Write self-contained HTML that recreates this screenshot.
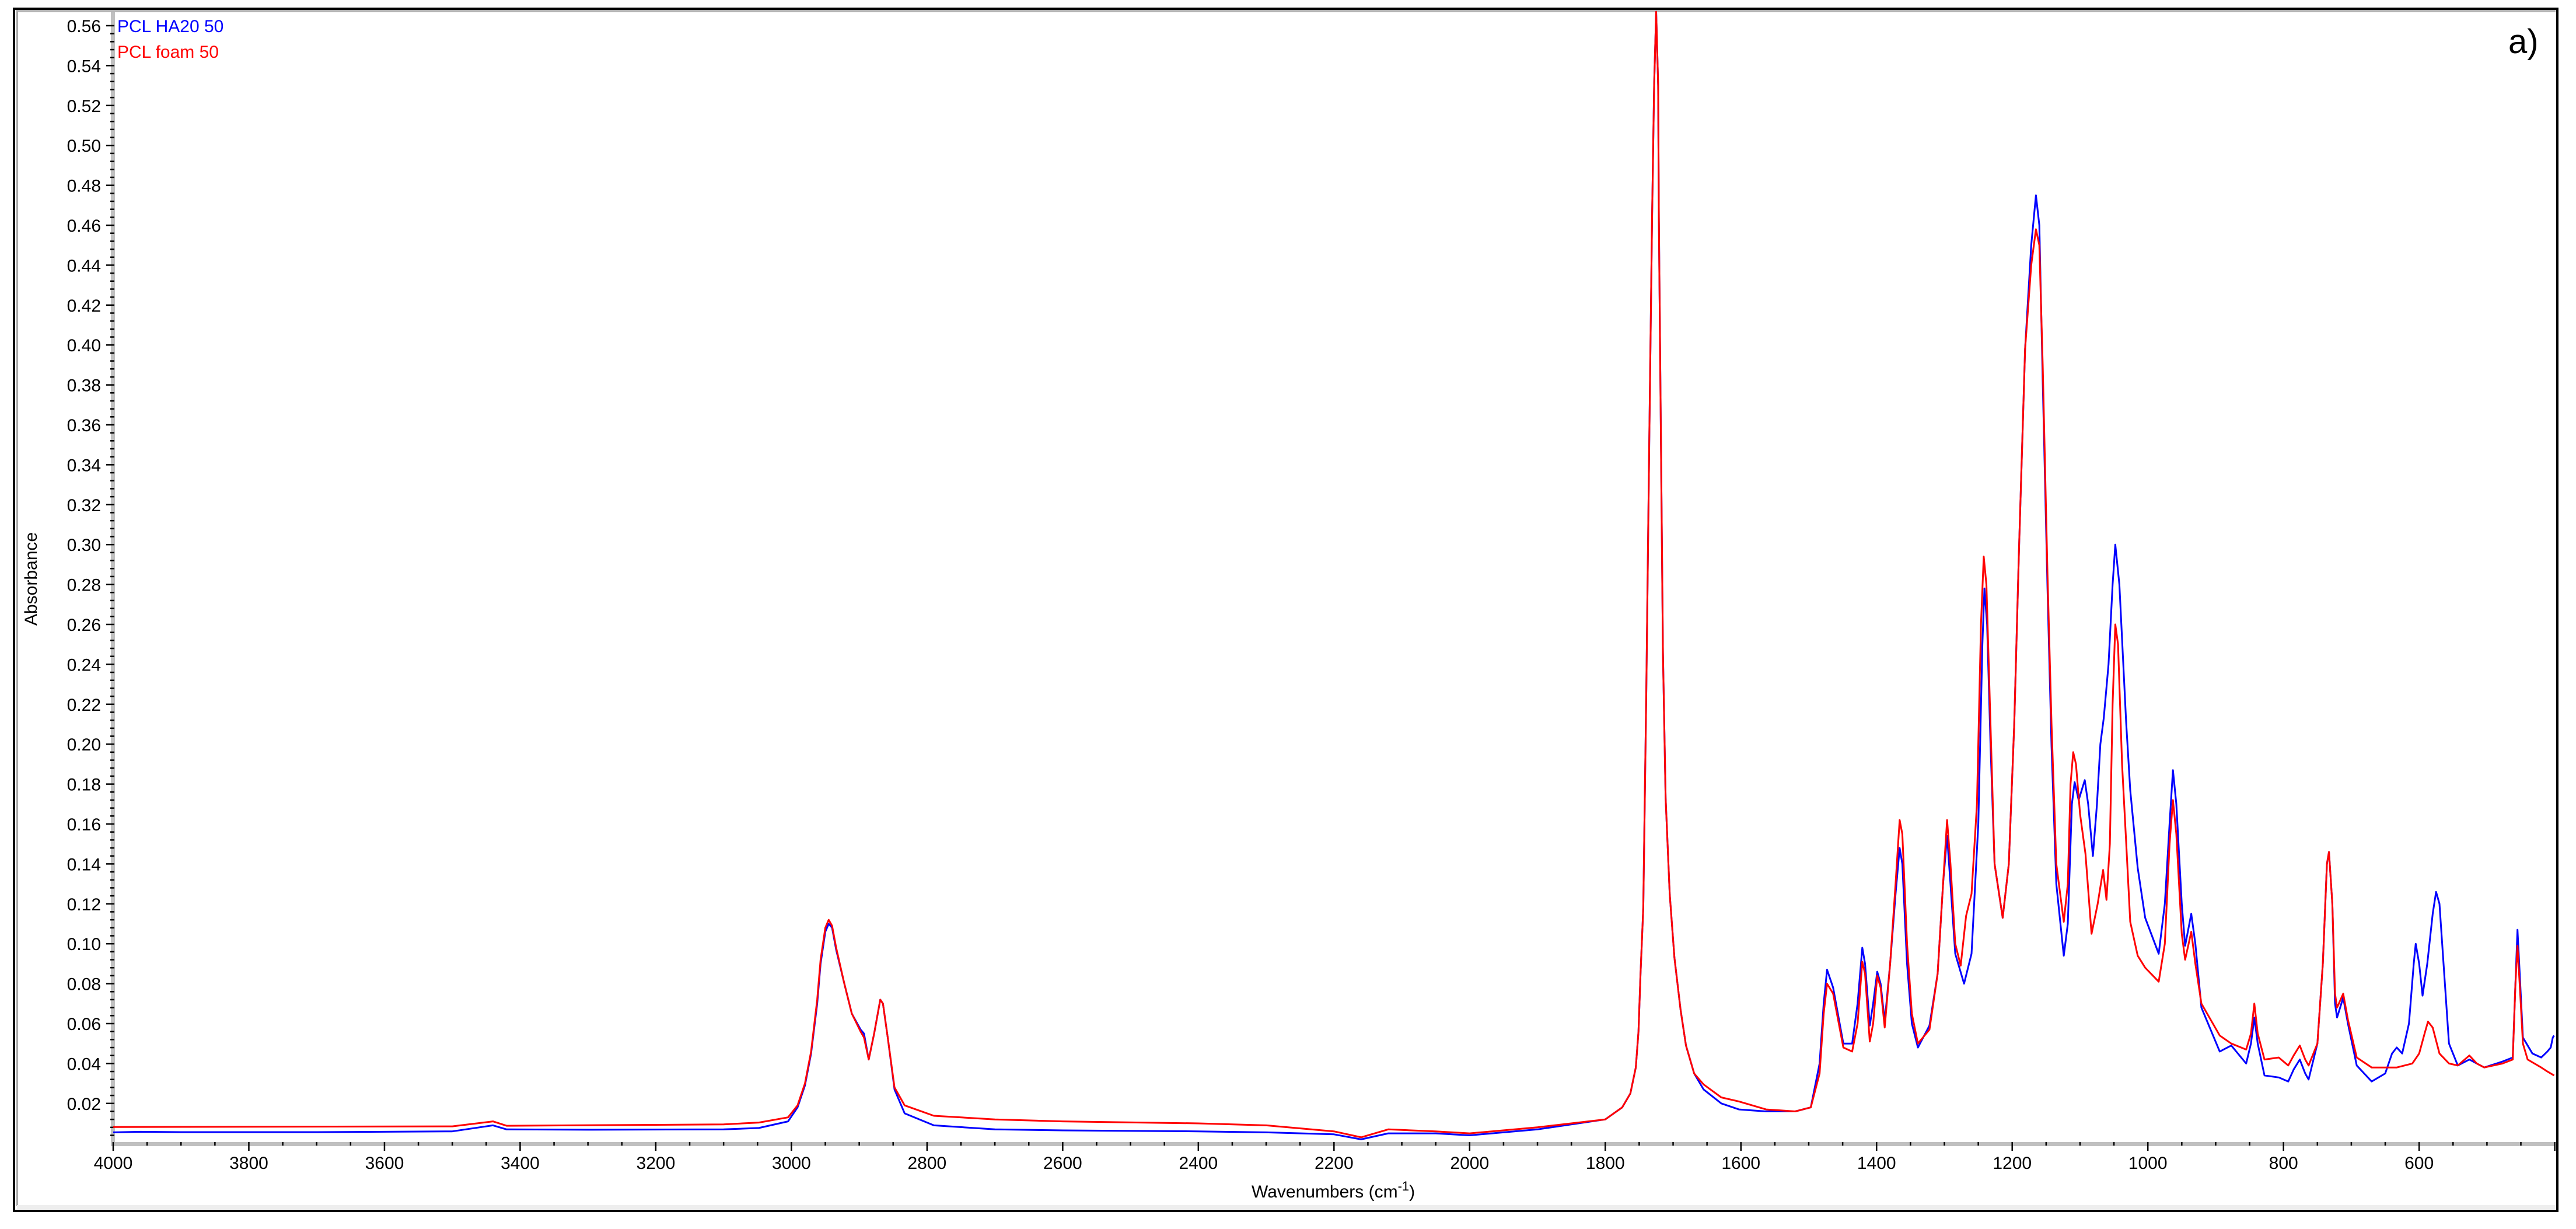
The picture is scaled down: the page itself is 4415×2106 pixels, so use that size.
<!DOCTYPE html>
<html><head><meta charset="utf-8"><style>
html,body{margin:0;padding:0;background:#fff;width:4415px;height:2106px;overflow:hidden}
svg{display:block}
text{font-family:"Liberation Sans",Arial,sans-serif}
</style></head><body>
<svg id="s" width="4415" height="2106" viewBox="0 0 4415 2106" xmlns="http://www.w3.org/2000/svg">
<rect x="0" y="0" width="4415" height="2106" fill="#fff"/>
<rect x="29" y="17" width="4351" height="4" fill="#b4b4b4"/>
<rect x="28" y="17" width="3" height="2050" fill="#a8a8a8"/>
<rect x="29" y="2065" width="4351" height="7" fill="#eeeeee"/>
<rect x="24" y="15" width="4359" height="2060" fill="none" stroke="#000" stroke-width="4"/>
<rect x="190" y="21" width="7" height="1943" fill="#c0c0c0"/>
<rect x="190" y="1957" width="4189" height="7" fill="#c0c0c0"/>
<g id="ticks" stroke="#000" stroke-width="2.5"></g>
<g id="labels" font-size="30" fill="#000"></g>
<g id="curves" fill="none" stroke-width="3" stroke-linejoin="round"></g>
<text x="201" y="55" font-size="30" fill="#0000ff">PCL HA20 50</text>
<text x="201" y="99" font-size="30" fill="#ff0000">PCL foam 50</text>
<text x="4299" y="91" font-size="58" fill="#000">a)</text>
<text transform="translate(63,992) rotate(-90)" text-anchor="middle" font-size="30" fill="#000">Absorbance</text>
<text x="2145" y="2052" font-size="30" fill="#000">Wavenumbers (cm<tspan dy="-12" font-size="22">-1</tspan><tspan dy="12">)</tspan></text>
</svg>
<script>
var NS="http://www.w3.org/2000/svg";
function X(w){return 194+(4000-w)*1.1624;}
function Y(v){return 44+(0.56-v)*3420;}
function el(p,n,a,t){var e=document.createElementNS(NS,n);for(var k in a)e.setAttribute(k,a[k]);if(t!==undefined)e.textContent=t;p.appendChild(e);return e;}
var T=document.getElementById('ticks'),L=document.getElementById('labels'),C=document.getElementById('curves');
// y ticks
for(var i=0;i<=140;i++){var v=i*0.004;var y=Y(v);if(y<22||y>1956)continue;
 var major=(i%5==0);
 el(T,'line',{x1:major?182:189,x2:196,y1:y,y2:y});
 if(major&&i>0){el(L,'text',{x:173,y:y+11,'text-anchor':'end'},(v).toFixed(2));}
}
// x ticks
for(var w=4000;w>=400;w-=50){var x=X(w);var major=(w%200==0);
 el(T,'line',{x1:x,x2:x,y1:1957,y2:major?1972:1963});
 if(major&&w>400)el(L,'text',{x:x,y:2003,'text-anchor':'middle'},String(w));
}
var main=[[1800,.012],[1775,.018],[1763,.025],[1755,.038],[1751,.056],[1748,.085],[1744,.118],[1739.5,.227],[1735,.355],[1731,.464],[1728,.53],[1725,.567],[1722,.53],[1721,.464],[1718,.355],[1715,.246],[1711,.173],[1705,.125],[1698,.093],[1689,.067],[1681,.049],[1669,.035]];
var B=[[4000,.0055],[3960,.0058],[3900,.0056],[3700,.0056],[3500,.006],[3460,.008],[3440,.009],[3420,.007],[3300,.0068],[3100,.007],[3048,.0077],[3005,.011],[2991,.018],[2980,.029],[2971,.045],[2962,.070],[2957,.090],[2950,.106],[2945,.110],[2940,.108],[2934,.097],[2922,.080],[2911,.065],[2898,.057],[2893,.055],[2886,.042],[2878,.055],[2869,.072],[2865,.070],[2858,.053],[2848,.027],[2833,.015],[2790,.009],[2700,.007],[2600,.0065],[2400,.006],[2300,.0055],[2200,.0045],[2160,.002],[2120,.005],[2050,.005],[2000,.004],[1900,.007]].concat(main).concat([[1655,.027],[1629,.02],[1603,.017],[1563,.016],[1520,.016],[1497,.018],[1484,.04],[1478,.07],[1473,.087],[1464,.078],[1449,.05],[1436,.05],[1428,.07],[1421,.098],[1417,.09],[1410,.059],[1405,.07],[1399,.086],[1394,.08],[1388,.061],[1380,.09],[1372,.125],[1366,.148],[1362,.14],[1355,.09],[1348,.06],[1339,.048],[1322,.059],[1310,.085],[1302,.13],[1296,.154],[1291,.13],[1284,.095],[1271,.080],[1260,.095],[1250,.16],[1244,.25],[1241,.278],[1237,.26],[1232,.2],[1226,.14],[1214,.113],[1205,.14],[1197,.21],[1190,.297],[1181,.398],[1172,.45],[1165,.475],[1160,.46],[1155,.382],[1148,.278],[1142,.199],[1135,.13],[1124,.094],[1118,.11],[1112,.17],[1108,.181],[1102,.172],[1093,.182],[1088,.17],[1081,.144],[1075,.17],[1070,.2],[1065,.213],[1058,.24],[1052,.28],[1048,.30],[1042,.28],[1032,.211],[1026,.177],[1015,.138],[1004,.113],[984,.095],[975,.12],[968,.16],[963,.187],[958,.17],[950,.12],[945,.099],[936,.115],[930,.1],[921,.068],[894,.046],[877,.049],[855,.040],[848,.05],[843,.063],[838,.05],[828,.034],[807,.033],[793,.031],[785,.037],[776,.042],[768,.035],[763,.032],[750,.05],[742,.09],[736,.14],[733,.146],[728,.12],[724,.07],[721,.063],[712,.073],[705,.06],[692,.039],[670,.031],[650,.035],[640,.045],[633,.048],[625,.045],[615,.06],[608,.09],[605,.100],[600,.09],[595,.074],[588,.09],[580,.115],[575,.126],[570,.12],[562,.08],[556,.05],[543,.039],[526,.042],[515,.04],[504,.038],[477,.041],[462,.043],[458,.08],[455,.107],[451,.08],[447,.053],[433,.045],[420,.043],[411,.046],[406,.048],[403,.053],[401,.054]]);
var R=[[4000,.0082],[3500,.0085],[3440,.011],[3420,.0088],[3100,.0095],[3048,.0104],[3005,.013],[2991,.019],[2980,.030],[2971,.046],[2962,.072],[2957,.092],[2950,.108],[2945,.112],[2940,.109],[2934,.098],[2922,.080],[2911,.065],[2898,.056],[2893,.053],[2886,.042],[2878,.055],[2869,.072],[2865,.070],[2858,.053],[2848,.028],[2833,.019],[2790,.0138],[2700,.012],[2600,.011],[2400,.010],[2300,.009],[2200,.006],[2160,.003],[2120,.007],[2050,.006],[2000,.005],[1900,.008]].concat(main).concat([[1655,.0295],[1629,.023],[1603,.021],[1563,.017],[1520,.016],[1497,.018],[1484,.035],[1478,.065],[1473,.08],[1464,.075],[1449,.048],[1436,.046],[1428,.06],[1421,.091],[1417,.085],[1410,.051],[1405,.06],[1399,.084],[1394,.078],[1388,.058],[1380,.09],[1372,.13],[1366,.162],[1362,.155],[1355,.1],[1348,.065],[1339,.05],[1322,.057],[1310,.085],[1302,.13],[1296,.162],[1291,.14],[1284,.1],[1276,.089],[1268,.114],[1260,.125],[1252,.17],[1246,.26],[1242,.294],[1238,.28],[1232,.21],[1226,.14],[1214,.113],[1205,.14],[1197,.21],[1190,.297],[1181,.398],[1172,.44],[1165,.458],[1160,.45],[1155,.39],[1148,.285],[1142,.21],[1135,.14],[1124,.111],[1118,.13],[1114,.18],[1110,.196],[1106,.19],[1100,.165],[1092,.145],[1083,.105],[1074,.12],[1066,.137],[1061,.122],[1056,.15],[1052,.22],[1048,.26],[1044,.25],[1038,.19],[1032,.151],[1026,.111],[1015,.094],[1004,.088],[984,.081],[975,.1],[968,.15],[963,.172],[958,.155],[950,.105],[945,.092],[936,.106],[930,.09],[921,.07],[894,.054],[877,.05],[855,.047],[848,.055],[843,.07],[838,.055],[828,.042],[807,.043],[793,.039],[785,.044],[776,.049],[768,.042],[763,.039],[750,.05],[742,.09],[736,.14],[733,.146],[728,.12],[724,.075],[721,.068],[712,.075],[705,.062],[692,.043],[670,.038],[633,.038],[610,.04],[600,.045],[592,.055],[587,.061],[580,.058],[570,.045],[556,.04],[543,.039],[526,.044],[515,.04],[504,.038],[477,.04],[462,.042],[458,.08],[455,.099],[451,.075],[447,.05],[440,.042],[430,.04],[420,.038],[411,.036],[401,.034]]);
function path(a){var d='';for(var i=0;i<a.length;i++){d+=(i?'L':'M')+X(a[i][0]).toFixed(1)+' '+Y(a[i][1]).toFixed(1);}return d;}
el(C,'path',{d:path(B),stroke:'#0000ff'});
el(C,'path',{d:path(R),stroke:'#ff0000'});
</script>
</body></html>
